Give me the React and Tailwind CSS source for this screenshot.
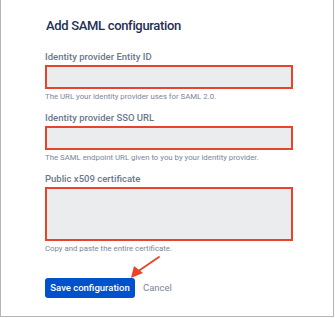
import React from 'react';

const fields = [
  { label: 'Identity provider Entity ID', help: 'The URL your identity provider uses for SAML 2.0.', tall: false },
  { label: 'Identity provider SSO URL', help: 'The SAML endpoint URL given to you by your identity provider.', tall: false },
  { label: 'Public x509 certificate', help: 'Copy and paste the entire certificate.', tall: true },
];

const Field = ({ label, help, tall }) => (
  <div className="flex flex-col">
    <label className="h-[12px] text-[9.5px] font-medium text-[#6b778c] leading-[12px] whitespace-nowrap">{label}</label>
    <div
      className={`mt-[2px] w-[248px] bg-[#ebeced] border-2 border-[#e8432c] ${tall ? 'h-[54px]' : 'h-[24px]'}`}
    />
    <p className="mt-[3px] h-[10px] text-[7.8px] text-[#7a869a] leading-[10px] whitespace-nowrap">{help}</p>
  </div>
);

const App = () => {
  return (
    <div className="w-[335px] h-[318px] bg-white" style={{ fontFamily: 'Roboto, "Liberation Sans", Arial, sans-serif' }}>
      <div className="w-[334px] h-[317px] border-l border-r border-b border-[#b5b5b5] pl-[44px] pt-[17px]">
        <h1 className="h-[18px] text-[13px] font-medium tracking-tight text-[#1f3052] leading-[18px] ml-px whitespace-nowrap">
          Add SAML configuration
        </h1>

        <div className="mt-[16px] flex flex-col gap-[10px]">
          {fields.map((f) => (
            <Field key={f.label} {...f} />
          ))}
        </div>

        {/* Actions */}
        <div className="relative mt-[24px] flex items-center">
          <button className="h-[20px] w-[90px] rounded-[3px] bg-[#0052cc] text-white text-[9.5px] font-medium whitespace-nowrap">
            Save configuration
          </button>
          <span className="ml-[8px] text-[9.5px] text-[#7a869a]">Cancel</span>

          <svg className="absolute left-[82px] top-[-24px]" width="36" height="28" viewBox="0 0 36 28">
            <line x1="32" y1="3" x2="10" y2="18" stroke="#e8432c" strokeWidth="1.8" strokeLinecap="round" />
            <path d="M4 24 L7 12 L16 19 Z" fill="#e8432c" />
          </svg>
        </div>
      </div>
    </div>
  );
};

export default App;
